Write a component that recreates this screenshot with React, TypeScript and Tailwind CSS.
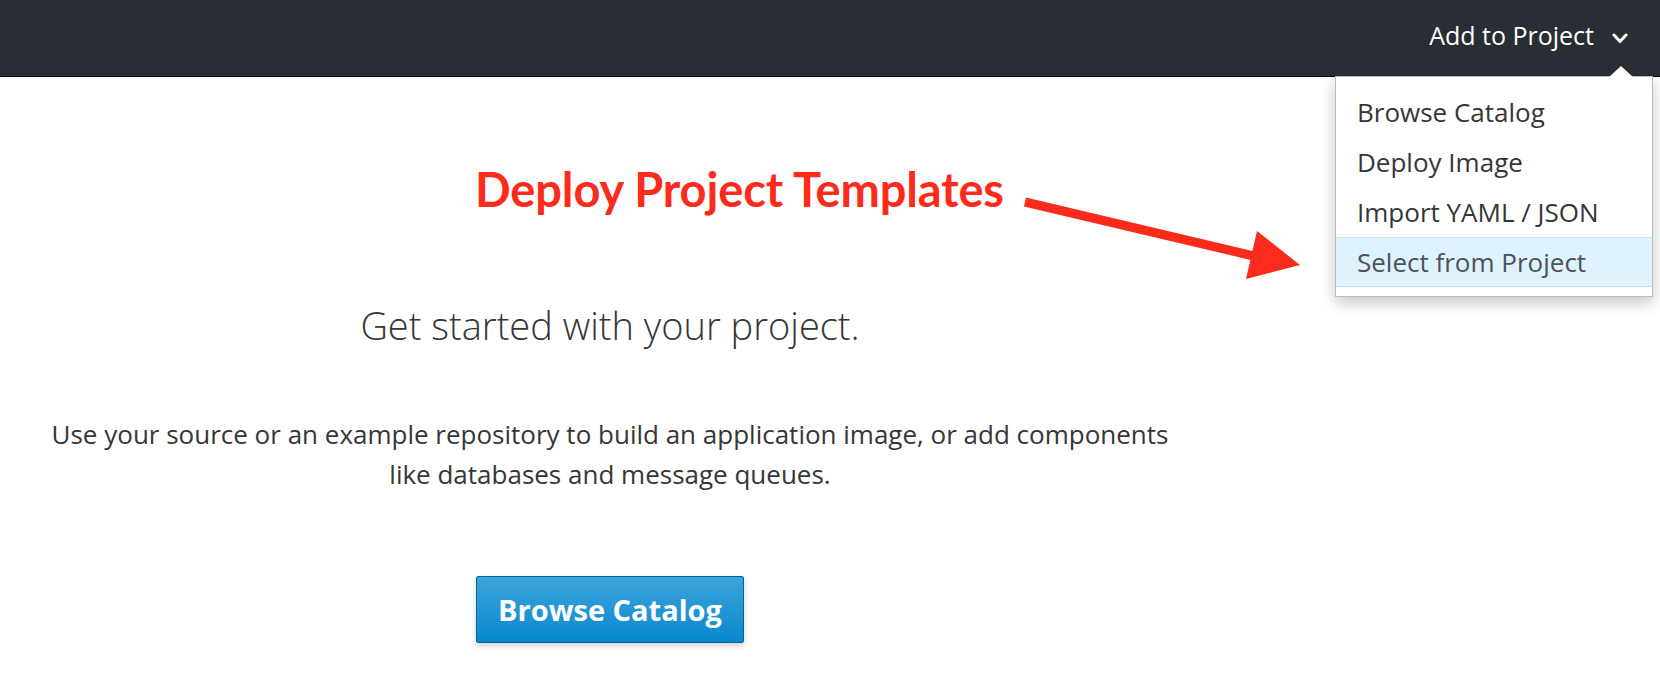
import { ReactNode } from 'react'

const MENU_ITEMS = ['Browse Catalog', 'Deploy Image', 'Import YAML / JSON', 'Select from Project']

function Chevron(): JSX.Element {
  return (
    <svg width="16" height="11" viewBox="0 0 16 11" className="ml-[18px] mt-[4px]">
      <polyline points="2,2 8,8.5 14,2" fill="none" stroke="#fff" strokeWidth="3" strokeLinecap="round" strokeLinejoin="round" />
    </svg>
  )
}

function MenuItem({ children, active }: { children: ReactNode; active?: boolean }): JSX.Element {
  return (
    <div
      className={
        active
          ? 'h-[50px] flex items-center px-[21px] text-[26px] text-[#4d5258] bg-[#def3ff] border-y border-[#bee1f4]'
          : 'h-[50px] flex items-center px-[21px] text-[26px] text-[#363636]'
      }
    >
      {children}
    </div>
  )
}

export default function App(): JSX.Element {
  return (
    <div className="relative w-[1660px] h-[674px] overflow-hidden bg-white font-['Open_Sans',sans-serif]">
      {/* top bar */}
      <div className="h-[77px] bg-[#292e34] border-b border-black flex items-center justify-end pr-[32px] pb-[4px]">
        <span className="text-[25px] text-white">Add to Project</span>
        <Chevron />
      </div>

      {/* open dropdown */}
      <div className="absolute top-[76px] left-[1335px] w-[318px] bg-white border border-[#bbbbbb] shadow-[0_6px_14px_rgba(0,0,0,0.22)] pt-[10px] pb-[9px]">
        <div className="absolute -top-[11px] left-[273px] w-0 h-0 border-x-[12px] border-x-transparent border-b-[11px] border-b-white" />
        {MENU_ITEMS.map((item, i) => (
          <MenuItem key={item} active={i === MENU_ITEMS.length - 1}>
            {item}
          </MenuItem>
        ))}
      </div>

      {/* empty project state */}
      <div className="w-[1220px] flex flex-col items-center text-center pt-[225px]">
        <h2 className="text-[38px] font-light leading-[46px] text-[#363636]">Get started with your project.</h2>
        <p className="mt-[66px] text-[26px] leading-[40px] text-[#363636]">
          Use your source or an example repository to build an application image, or add components
          <br />
          like databases and message queues.
        </p>
        <button
          type="button"
          className="mt-[82px] w-[268px] h-[67px] rounded-[2px] border border-[#00659c] bg-gradient-to-b from-[#39a5dc] to-[#0088ce] text-white text-[29px] font-bold shadow-[0_3px_6px_rgba(0,0,0,0.18)]"
        >
          Browse Catalog
        </button>
      </div>

      {/* annotation */}
      <div className="absolute left-[475px] top-[166px] font-['Lato',sans-serif] font-bold text-[47px] leading-none text-[#fc2b1c] tracking-[-0.12px]">
        Deploy Project Templates
      </div>
      <svg className="absolute left-[1000px] top-[180px]" width="320" height="120" viewBox="0 0 320 120">
        <line x1="25" y1="22" x2="262" y2="78" stroke="#fc2b1c" strokeWidth="9" />
        <polygon points="257,51 300,85 246,99" fill="#fc2b1c" />
      </svg>
    </div>
  )
}
